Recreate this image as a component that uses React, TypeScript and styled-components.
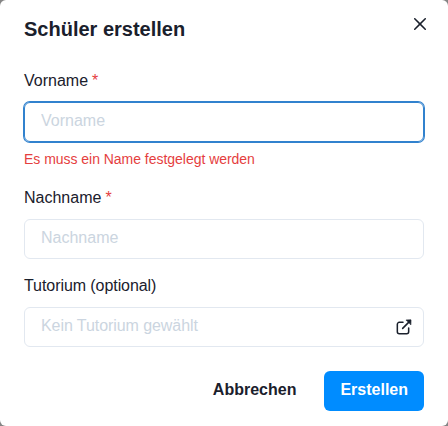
import React from "react";
import styled, { createGlobalStyle } from "styled-components";

const GlobalStyle = createGlobalStyle`
  *, *::before, *::after { box-sizing: border-box; }
  body { margin: 0; background: #858585; color: #1a202c; font: 16px/24px "Liberation Sans", Arial, sans-serif; }
  button, input { font: inherit; color: inherit; }
`;
const Dialog = styled.section`
  width: 448px; height: 426px; background: #fff; border-radius: 6px;
  display: flex; flex-direction: column;
`;
const Header = styled.header`
  display: flex; justify-content: space-between; height: 62px; padding: 14px 24px 0;
`;
const Title = styled.h1`
  margin: 0; font-size: 20px; line-height: 30px; font-weight: 700;
`;
const CloseButton = styled.button`
  display: flex; align-items: center; justify-content: center; width: 32px; height: 32px;
  margin: -6px -12px 0 0; padding: 0; border: 0; background: none;
`;
const Body = styled.form`padding: 8px 24px 0;`;
const Field = styled.div<{ $gap: number }>`margin-bottom: ${p => p.$gap}px;`;
const Label = styled.label<{ $tight?: boolean }>`
  display: block; height: 32px; line-height: 22px;
  letter-spacing: ${p => p.$tight ? "-0.07px" : "normal"};
`;
const Required = styled.span`color: #e53e3e; margin-left: 4px;`;
const Control = styled.div<{ $focused?: boolean }>`
  display: flex; align-items: center; height: 40px; padding: 0 11px 0 16px;
  border: 1px solid ${p => p.$focused ? "#3182ce" : "#e2e8f0"};
  box-shadow: ${p => p.$focused ? "0 0 0 1px #3182ce" : "none"};
  border-radius: 6px;
`;
const Input = styled.input<{ $tight?: boolean }>`
  flex: 1; min-width: 0; height: 36px; border: 0; outline: 0; padding: 0 0 2px; background: transparent;
  letter-spacing: ${p => p.$tight ? "-0.07px" : "normal"};
  &::placeholder { color: #cbd5e0; opacity: 1; }
`;
const ErrorText = styled.p`margin: 9px 0 0; font-size: 14px; line-height: 17px; letter-spacing: -0.03px; color: #e53e3e;`;
const Footer = styled.footer`display: flex; justify-content: flex-end; gap: 12px; padding: 0 24px;`;
const Button = styled.button<{ $primary?: boolean }>`
  height: 40px; padding: 0 16px 2px; border: 0; border-radius: 6px; font-weight: 700;
  background: ${p => p.$primary ? "#008cff" : "transparent"}; color: ${p => p.$primary ? "#fff" : "#1a202c"};
`;

export default function App() {
  return (
    <>
      <GlobalStyle />
      <Dialog role="dialog" aria-label="Schüler erstellen">
        <Header>
          <Title>Schüler erstellen</Title>
          <CloseButton aria-label="Schließen">
            <svg width="12" height="12" viewBox="0 0 24 24"><path fill="currentColor" d="M.439,21.44a1.5,1.5,0,0,0,2.122,2.121L11.823,14.3a.25.25,0,0,1,.354,0l9.262,9.263a1.5,1.5,0,1,0,2.122-2.121L14.3,12.177a.25.25,0,0,1,0-.354l9.263-9.262A1.5,1.5,0,0,0,21.439.44L12.177,9.7a.25.25,0,0,1-.354,0L2.561.44A1.5,1.5,0,0,0,.439,2.561L9.7,11.823a.25.25,0,0,1,0,.354Z" /></svg>
          </CloseButton>
        </Header>
        <Body>
          <Field $gap={19}>
            <Label>Vorname<Required>*</Required></Label>
            <Control $focused><Input placeholder="Vorname" /></Control>
            <ErrorText>Es muss ein Name festgelegt werden</ErrorText>
          </Field>
          <Field $gap={16}>
            <Label>Nachname<Required>*</Required></Label>
            <Control><Input placeholder="Nachname" /></Control>
          </Field>
          <Field $gap={24}>
            <Label $tight>Tutorium (optional)</Label>
            <Control>
              <Input $tight placeholder="Kein Tutorium gewählt" readOnly />
              <svg width="16" height="16" viewBox="0 0 24 24" fill="none" stroke="currentColor" strokeWidth="2.3" strokeLinecap="round" strokeLinejoin="round"><path d="M10.5 5H5a3 3 0 0 0-3 3v11a3 3 0 0 0 3 3h11a3 3 0 0 0 3-3v-5.5M10 14 20 4" /><path fill="currentColor" strokeWidth="1" d="m15.5 1.5 7-.2-.2 7Z" /></svg>
            </Control>
          </Field>
        </Body>
        <Footer><Button>Abbrechen</Button><Button $primary>Erstellen</Button></Footer>
      </Dialog>
    </>
  );
}
